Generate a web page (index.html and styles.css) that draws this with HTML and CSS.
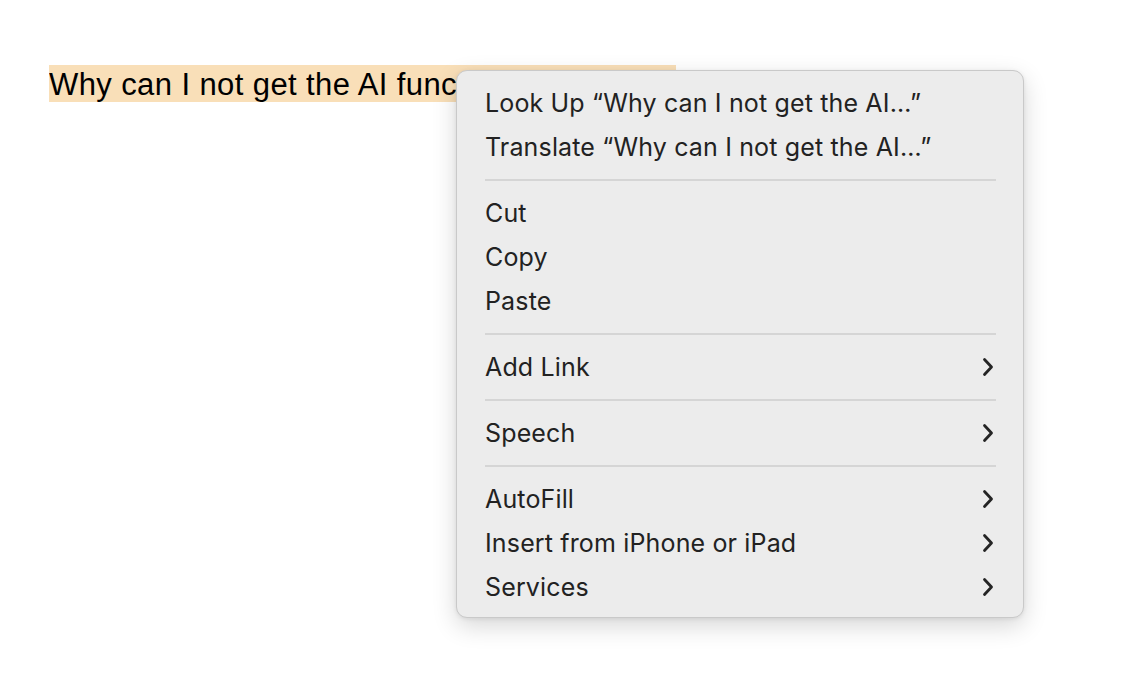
FILE: index.html
```html
<!DOCTYPE html>
<html>
<head>
<meta charset="utf-8">
<link rel="stylesheet" href="styles.css">
</head>
<body>
<div class="doc">
  <span class="sel">Why can I not get the AI functionality working in here?</span>
</div>
<div class="menu">
  <div class="item">Look Up “Why can I not get the AI…”</div>
  <div class="item">Translate “Why can I not get the AI…”</div>
  <div class="sep"></div>
  <div class="item">Cut</div>
  <div class="item">Copy</div>
  <div class="item">Paste</div>
  <div class="sep"></div>
  <div class="item sub">Add Link<svg class="chev" viewBox="0 0 12 20"><path d="M2.5 2.5 L9.5 10 L2.5 17.5"/></svg></div>
  <div class="sep"></div>
  <div class="item sub">Speech<svg class="chev" viewBox="0 0 12 20"><path d="M2.5 2.5 L9.5 10 L2.5 17.5"/></svg></div>
  <div class="sep"></div>
  <div class="item sub">AutoFill<svg class="chev" viewBox="0 0 12 20"><path d="M2.5 2.5 L9.5 10 L2.5 17.5"/></svg></div>
  <div class="item sub">Insert from iPhone or iPad<svg class="chev" viewBox="0 0 12 20"><path d="M2.5 2.5 L9.5 10 L2.5 17.5"/></svg></div>
  <div class="item sub">Services<svg class="chev" viewBox="0 0 12 20"><path d="M2.5 2.5 L9.5 10 L2.5 17.5"/></svg></div>
</div>
</body>
</html>
```
FILE: styles.css
```css
html, body {
  margin: 0;
  padding: 0;
  background: #ffffff;
}
body {
  width: 1124px;
  height: 690px;
  position: relative;
  overflow: hidden;
}
.doc {
  padding: 65px 0 0 49px;
}
.sel {
  display: inline-block;
  width: 627px;
  height: 37px;
  line-height: 39px;
  overflow: hidden;
  white-space: nowrap;
  background: #f9dfb8;
  color: #000;
  font-family: "Liberation Sans", Arial, sans-serif;
  font-size: 31px;
  letter-spacing: 0.4px;
}
.menu {
  position: absolute;
  left: 456px;
  top: 70px;
  width: 568px;
  box-sizing: border-box;
  padding: 10px 0 8px;
  background: #ececec;
  border: 1px solid #c9c9c9;
  border-radius: 11px;
  box-shadow: 0 8px 24px rgba(0,0,0,0.16), 0 1px 4px rgba(0,0,0,0.08);
  font-family: Inter, "Noto Sans", sans-serif;
  font-size: 25px;
  letter-spacing: 0.15px;
  color: #222222;
}
.item {
  height: 44px;
  display: flex;
  align-items: center;
  justify-content: space-between;
  padding: 0 29px 0 28px;
}
.chev {
  width: 12px;
  height: 20px;
  fill: none;
  stroke: #242424;
  stroke-width: 2.8;
  stroke-linecap: round;
  stroke-linejoin: round;
}
.sep {
  height: 2px;
  margin: 10px 27px 10px 28px;
  background: #d5d5d5;
}
```
